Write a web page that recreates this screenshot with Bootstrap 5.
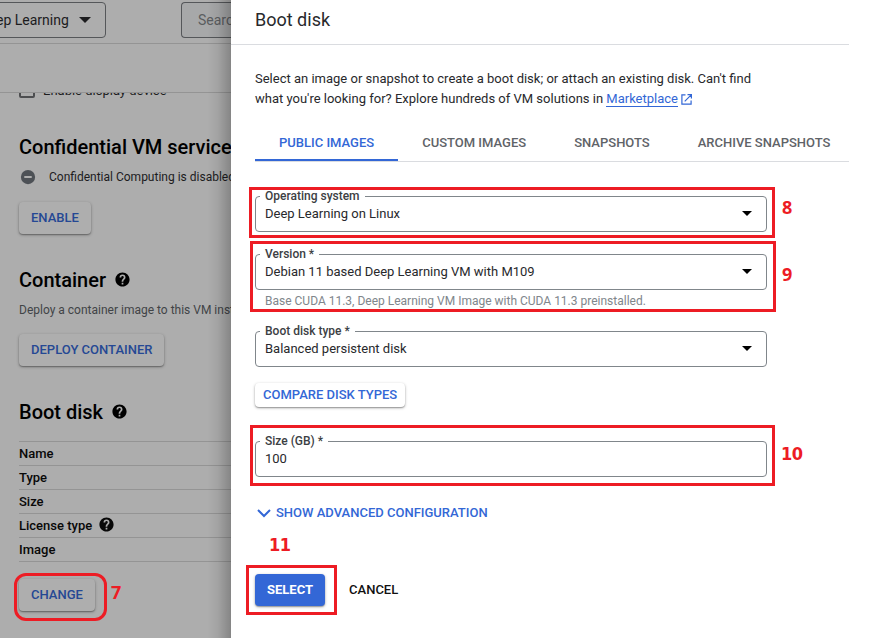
<!DOCTYPE html>
<html lang="en">
<head>
<meta charset="utf-8">
<meta name="viewport" content="width=device-width, initial-scale=1">
<title>Boot disk</title>
<link href="https://cdn.jsdelivr.net/npm/bootstrap@5.3.0/dist/css/bootstrap.min.css" rel="stylesheet">
<style>
  body { font: 400 13px/20px Roboto, "Liberation Sans", sans-serif; color: #28292c; width: 871px; height: 638px; letter-spacing: 0; }
  .backdrop-pane { width: 231px; background: #adadad; color: #1c1c1e; }
  .backdrop-pane::after { content: ""; position: absolute; inset: 0 0 0 auto; width: 24px; background: linear-gradient(to right, rgba(0,0,0,0), rgba(0,0,0,.06) 45%, rgba(0,0,0,.23)); }
  .top-strip { height: 44px; border-bottom: 1px solid #949494; padding-top: 2px; }
  .sub-strip { height: 49px; border-bottom: 1px solid #949494; }
  .project-pick { width: 107px; height: 36px; margin-left: -1px; padding-right: 14px; border: 1px solid #55575a; border-radius: 0 4px 4px 0; font-size: 14px; }
  .project-pick span { margin-left: -4px; }
  .search-box { width: 50px; height: 36px; border: 1px solid #55575a; border-right: 0; border-radius: 4px 0 0 4px; background: #a7a8a9; color: #5b5d60; font-size: 14px; padding-left: 16px; }
  .scroll-pane { height: 545px; padding-left: 19px; }
  .display-row { height: 20px; margin-top: -12px; }
  .check-box { width: 16px; height: 16px; border: 2px solid #4d4e50; border-radius: 2px; margin: 1px 8px 0 0; }
  .section-title { font-size: 20px; line-height: 24px; font-weight: 500; color: #000; margin: 34px 0 0; }
  .section-title svg { margin: -2px 0 0 8px; }
  .fine-row { font-size: 12px; height: 20px; margin-top: 8px; }
  .fine-row svg { margin-right: 12px; }
  .muted-row { color: #414447; }
  .raised-btn { --bs-btn-font-size: 13px; --bs-btn-font-weight: 500; --bs-btn-line-height: 20px; --bs-btn-padding-y: 5px; --bs-btn-padding-x: 11px; --bs-btn-border-radius: 4px; --bs-btn-color: #3367d6; box-shadow: 0 1px 3px rgba(0,0,0,.32), 0 1px 1px rgba(0,0,0,.2); }
  .backdrop-pane .raised-btn { --bs-btn-color: #254894; background: #aeaeae; margin-top: 14px; }
  .backdrop-pane .enable-btn { margin-top: 15px; }
  .backdrop-pane .change-btn { margin-top: 17px; }
  .props { border-top: 1px solid #949494; font-weight: 500; color: #080808; margin-top: 17px; }
  .props li { height: 24px; border-bottom: 1px solid #949494; }
  .props svg { margin: -2px 0 0 6px; }
  .sheet-head { height: 45px; width: 618px; border-bottom: 1px solid #dadce0; font-size: 18px; padding: 0 0 5px 24px; }
  .sheet-body { padding: 24px 0 0 24px; }
  .market-link { color: #3367d6; border-bottom: 1px solid #3367d6; text-decoration: none; }
  .sheet-tabs { --bs-nav-link-padding-x: 24px; --bs-nav-link-color: #5f6368; height: 39px; width: 594px; margin-top: 14px; border-bottom: 1px solid #dadce0; flex-wrap: nowrap; }
  .sheet-tabs .nav-link { font-weight: 500; height: 38px; padding-top: 10px; white-space: nowrap; }
  .sheet-tabs .nav-link.active { color: #3367d6; border-bottom: 2px solid #3367d6; }
  .outline-field { width: 512px; height: 43px; margin-top: 15px; }
  .outline-field.gap-above { margin-top: 27px; }
  .outline-field fieldset { height: 43px; border: 1px solid #80868b; border-radius: 4px; padding: 0 14px 0 9px; }
  .outline-field legend { float: none; width: auto; font-size: 12px; line-height: 14px; height: 14px; font-weight: 500; color: #3c4043; margin: 0 0 0 -5px; padding: 0 5px; }
  .field-value { height: 20px; margin-top: 1px; }
  .field-value svg { color: #000; margin-top: -1px; }
  .helper { font-size: 12px; line-height: 16px; color: #80868b; padding-left: 10px; margin-top: 3px; }
  .compare-btn { --bs-btn-padding-y: 1px; --bs-btn-padding-x: 7px; margin-top: 16px; }
  .advanced { margin-top: 26px; color: #3367d6; font-weight: 500; gap: 3px; }
  .actions { margin-top: 51px; gap: 24px; font-weight: 500; color: #111; }
  .select-btn { --bs-btn-color: #fff; background: #3367d6; font-weight: 700; }
  .mark-box { position: absolute; border: 3px solid #ed1c24; pointer-events: none; }
  .mark-num { position: absolute; color: #ed1c24; font: 700 18px/20px "Open Sans", sans-serif; }
  .mark-num.two { font-family: "DejaVu Sans Condensed", "DejaVu Sans", sans-serif; font-stretch: condensed; letter-spacing: -.6px; }
  .m8 { left: 249px; top: 187px; width: 526px; height: 51px; }
  .m9 { left: 250px; top: 241px; width: 526px; height: 71px; }
  .m10 { left: 250px; top: 425px; width: 525px; height: 61px; }
  .m11 { left: 246px; top: 565px; width: 91px; height: 50px; }
  .m7 { left: 14px; top: 573px; width: 93px; height: 48px; border-radius: 12px; }
  .n7 { left: 111px; top: 582px; } .n8 { left: 782px; top: 197px; } .n9 { left: 782px; top: 264px; }
  .n10 { left: 781px; top: 444px; } .n11 { left: 269px; top: 535px; }
</style>
<script src="https://cdn.jsdelivr.net/npm/bootstrap@5.3.0/dist/js/bootstrap.bundle.min.js"></script>
</head>
<body class="position-relative overflow-hidden d-flex bg-white">
<svg class="d-none">
  <symbol id="help" viewBox="0 0 24 24"><path fill="currentColor" d="M12 2C6.480 2 2 6.480 2 12s4.480 10 10 10 10-4.480 10-10S17.520 2 12 2zm1.200 17h-2.400v-2.300h2.400V19zm2.100-7.700-.9.900c-.8.800-1.200 1.400-1.200 2.900h-2.400v-.6c0-1.100.4-2.100 1.200-2.800l1.200-1.300c.4-.3.600-.8.600-1.400a1.800 1.800 0 0 0-3.600 0H7.800a4.200 4.200 0 0 1 8.400 0c0 .9-.4 1.700-.9 2.300z"/></symbol>
  <symbol id="caret" viewBox="0 0 12 6"><path fill="currentColor" d="M0 0h12L6 6z"/></symbol>
</svg>

<aside class="backdrop-pane position-relative flex-shrink-0 overflow-hidden">
  <div class="top-strip d-flex">
    <div class="project-pick d-flex align-items-center justify-content-between text-nowrap flex-shrink-0"><span>ep Learning</span><svg width="12" height="6"><use href="#caret"/></svg></div>
    <div class="search-box ms-auto d-flex align-items-center overflow-hidden">Search</div>
  </div>
  <div class="sub-strip"></div>
  <div class="scroll-pane overflow-hidden text-nowrap">
    <div class="display-row d-flex"><span class="check-box"></span><span>Enable display device</span></div>
    <h2 class="section-title">Confidential VM service</h2>
    <div class="fine-row d-flex align-items-center">
      <svg class="flex-shrink-0" width="18" height="18" viewBox="0 0 24 24"><circle cx="12" cy="12" r="9.500" fill="#4d5156"/><path fill="#adadad" d="M7 10.700h10v2.600H7z"/></svg><span>Confidential Computing is disabled</span>
    </div>
    <button class="btn raised-btn enable-btn d-block">ENABLE</button>
    <h2 class="section-title d-flex align-items-center">Container<svg width="17" height="17"><use href="#help"/></svg></h2>
    <div class="fine-row muted-row">Deploy a container image to this VM instance</div>
    <button class="btn raised-btn d-block">DEPLOY CONTAINER</button>
    <h2 class="section-title d-flex align-items-center">Boot disk<svg width="17" height="17"><use href="#help"/></svg></h2>
    <ul class="props list-unstyled mb-0">
      <li class="d-flex align-items-center">Name</li>
      <li class="d-flex align-items-center">Type</li>
      <li class="d-flex align-items-center">Size</li>
      <li class="d-flex align-items-center">License type<svg width="17" height="17"><use href="#help"/></svg></li>
      <li class="d-flex align-items-center">Image</li>
    </ul>
    <button class="btn raised-btn change-btn d-block">CHANGE</button>
  </div>
</aside>

<main class="flex-grow-1">
  <header class="sheet-head d-flex align-items-center">Boot disk</header>
  <div class="sheet-body">
    <p class="mb-0">Select an image or snapshot to create a boot disk; or attach an existing disk. Can't find<br>what you're looking for? Explore hundreds of VM solutions in <a class="market-link" href="#">Marketplace</a>
      <svg width="11" height="11" viewBox="0 0 11 11" fill="none" stroke="#3367d6" stroke-width="1.200"><path d="M4.500.9H.9v9.200h9.200V6.500M6.500.6h3.900v3.900M10.200.8 3.700 7.300"/></svg></p>
    <nav class="nav sheet-tabs">
      <a class="nav-link active" href="#">PUBLIC IMAGES</a>
      <a class="nav-link" href="#">CUSTOM IMAGES</a>
      <a class="nav-link" href="#">SNAPSHOTS</a>
      <a class="nav-link" href="#">ARCHIVE SNAPSHOTS</a>
    </nav>
    <div class="outline-field gap-above"><fieldset><legend>Operating system</legend>
      <div class="field-value d-flex align-items-center justify-content-between">Deep Learning on Linux<svg width="10" height="5"><use href="#caret"/></svg></div></fieldset></div>
    <div class="outline-field"><fieldset><legend>Version *</legend>
      <div class="field-value d-flex align-items-center justify-content-between">Debian 11 based Deep Learning VM with M109<svg width="10" height="5"><use href="#caret"/></svg></div></fieldset></div>
    <div class="helper">Base CUDA 11.3, Deep Learning VM Image with CUDA 11.3 preinstalled.</div>
    <div class="outline-field"><fieldset><legend>Boot disk type *</legend>
      <div class="field-value d-flex align-items-center justify-content-between">Balanced persistent disk<svg width="10" height="5"><use href="#caret"/></svg></div></fieldset></div>
    <button class="btn raised-btn compare-btn d-block">COMPARE DISK TYPES</button>
    <div class="outline-field gap-above"><fieldset><legend>Size (GB) *</legend>
      <div class="field-value">100</div></fieldset></div>
    <div class="advanced d-flex align-items-center"><svg width="18" height="10" viewBox="0 0 18 10" fill="none" stroke="currentColor" stroke-width="2"><path d="m3 2 6 6 6-6"/></svg><span>SHOW ADVANCED CONFIGURATION</span></div>
    <div class="actions d-flex align-items-center"><button class="btn raised-btn select-btn">SELECT</button><span>CANCEL</span></div>
  </div>
</main>

<div class="mark-box m7"></div><div class="mark-box m8"></div><div class="mark-box m9"></div><div class="mark-box m10"></div><div class="mark-box m11"></div>
<span class="mark-num n7">7</span><span class="mark-num n8">8</span><span class="mark-num n9">9</span><span class="mark-num two n10">10</span><span class="mark-num two n11">11</span>
</body>
</html>
